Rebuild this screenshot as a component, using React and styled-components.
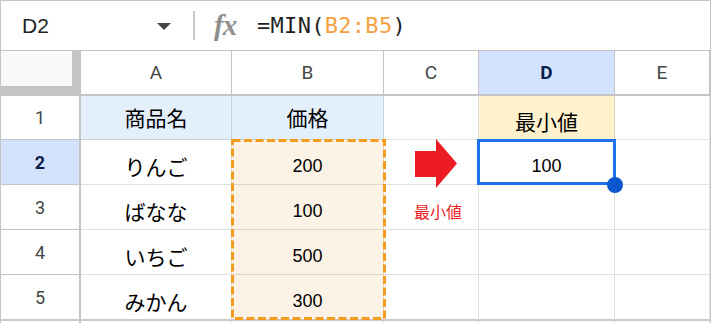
import React from "react";
import styled, { createGlobalStyle } from "styled-components";

const GlobalStyle = createGlobalStyle`
  html, body { margin: 0; padding: 0; background: #fff; }
  body { font-family: "Liberation Sans", "Noto Sans CJK JP", sans-serif; }
`;

const COLS = "80px 151px 152px 95px 136px 95px";
const GRID = "rgba(0,0,0,0.12)";
const HEAD_LINE = "#c4c4c4";

const Frame = styled.div`
  width: 711px;
  height: 323px;
  box-sizing: border-box;
  overflow: hidden;
  border: 1px solid ${HEAD_LINE};
  border-bottom: none;
  background: #fff;
`;

const FormulaBar = styled.div`
  height: 50px;
  box-sizing: border-box;
  border-bottom: 1px solid ${HEAD_LINE};
  display: flex;
  align-items: center;
`;

const NameBox = styled.div`
  width: 192px;
  box-sizing: border-box;
  padding: 0 22px 0 21px;
  display: flex;
  align-items: center;
  justify-content: space-between;
  font-family: "Liberation Sans", Arial, sans-serif;
  font-size: 21px;
  color: #1f1f1f;
`;

const Caret = styled.span`
  width: 0;
  height: 0;
  border-left: 7px solid transparent;
  border-right: 7px solid transparent;
  border-top: 7px solid #444746;
  margin-top: 1px;
`;

const Separator = styled.div`
  width: 2px;
  height: 29px;
  background: #c7c7c7;
`;

const FxIcon = styled.span`
  width: 28px;
  margin-left: 19px;
  font-family: "Liberation Serif", "Times New Roman", serif;
  font-style: italic;
  font-weight: bold;
  font-size: 29px;
  line-height: 1;
  color: #8f8f8f;
  letter-spacing: -1px;
`;

const Formula = styled.div`
  margin-left: 15px;
  font-family: "DejaVu Sans Mono", "Liberation Mono", monospace;
  font-size: 22px;
  color: #1f1f1f;
  letter-spacing: 0.3px;
`;

const Ref = styled.span`
  color: #f6a042;
`;

const Row = styled.div`
  display: grid;
  grid-template-columns: ${COLS};
  grid-template-rows: ${(p) => p.$h}px;
  height: ${(p) => p.$h}px;
`;

const Corner = styled.div`
  box-sizing: border-box;
  background: #f8f9fa;
  border-right: 9px solid ${HEAD_LINE};
  border-bottom: 10px solid ${HEAD_LINE};
`;

const ColHead = styled.div`
  box-sizing: border-box;
  display: flex;
  align-items: center;
  justify-content: center;
  border-right: 1px solid ${HEAD_LINE};
  border-bottom: 2px solid ${HEAD_LINE};
  background: ${(p) => (p.$active ? "#d3e3fd" : "#fff")};
  font-family: Roboto, "Liberation Sans", sans-serif;
  font-size: 19px;
  font-weight: ${(p) => (p.$active ? 700 : 400)};
  color: ${(p) => (p.$active ? "#0b1f4e" : "#444746")};
`;

const RowHead = styled.div`
  box-sizing: border-box;
  display: flex;
  align-items: center;
  justify-content: center;
  border-right: 2px solid ${HEAD_LINE};
  border-bottom: ${(p) => (p.$last ? "2px solid #c9c9c9" : `1px solid ${HEAD_LINE}`)};
  background: ${(p) => (p.$active ? "#d3e3fd" : "#fff")};
  font-family: Roboto, "Liberation Sans", sans-serif;
  font-size: 18px;
  font-weight: ${(p) => (p.$active ? 700 : 400)};
  color: ${(p) => (p.$active ? "#0b1f4e" : "#444746")};
`;

const Cell = styled.div`
  position: relative;
  box-sizing: border-box;
  min-height: 0;
  display: flex;
  align-items: center;
  justify-content: center;
  padding-top: ${(p) => p.$pt || 0}px;
  padding-left: ${(p) => p.$pl || 0}px;
  background: ${(p) => p.$bg || "#fff"};
  border-right: 1px solid ${GRID};
  border-bottom: ${(p) => (p.$last ? "2px solid #c9c9c9" : `1px solid ${GRID}`)};
  font-family: "Liberation Sans", Arial, sans-serif;
  font-size: 18px;
  line-height: 1.2;
  color: #000;
`;

const Jp = styled.span`
  font-family: "Noto Sans CJK JP", sans-serif;
  font-size: 21px;
  line-height: 1.2;
`;

const RedLabel = styled.span`
  font-family: "Noto Sans CJK JP", sans-serif;
  font-size: 16px;
  line-height: 1.2;
  color: #ee2027;
`;

const ArrowSvg = styled.svg`
  position: relative;
  z-index: 1;
  flex: none;
`;

const RangeOutline = styled.svg`
  position: absolute;
  left: -1px;
  top: -1px;
  z-index: 2;
  pointer-events: none;
`;

const Selection = styled.div`
  position: absolute;
  left: -2px;
  top: -1px;
  width: 139px;
  height: 46px;
  box-sizing: border-box;
  border: 3px solid #1a73e8;
  z-index: 3;
`;

const Handle = styled.span`
  position: absolute;
  left: 127px;
  top: 35px;
  width: 16px;
  height: 16px;
  border-radius: 50%;
  background: #0b57d0;
`;

const BLUE = "#e4effc";
const YELLOW = "#fff2cc";
const BEIGE = "#fcf3e6";

const RedArrow = () => (
  <ArrowSvg width="42" height="50" viewBox="0 0 42 50">
    <rect x="0" y="12" width="21.5" height="26" fill="#ed1c24" />
    <polygon points="21,0 42,24.5 21,49" fill="#ed1c24" />
  </ArrowSvg>
);

const RangeBox = () => (
  <RangeOutline width="155" height="182" viewBox="0 0 155 182">
    <rect
      x="1.5"
      y="1.5"
      width="152"
      height="178"
      fill="none"
      stroke="#f39c1f"
      strokeWidth="3"
      strokeDasharray="8 3.5"
    />
  </RangeOutline>
);

const data = [
  { n: 2, a: "りんご", b: "200" },
  { n: 3, a: "ばなな", b: "100" },
  { n: 4, a: "いちご", b: "500" },
  { n: 5, a: "みかん", b: "300" },
];

export default function App() {
  return (
    <>
      <GlobalStyle />
      <Frame>
        <FormulaBar>
          <NameBox>
            <span>D2</span>
            <Caret />
          </NameBox>
          <Separator />
          <FxIcon>fx</FxIcon>
          <Formula>
            =MIN(<Ref>B2:B5</Ref>)
          </Formula>
        </FormulaBar>

        <Row $h={45}>
          <Corner />
          <ColHead>A</ColHead>
          <ColHead>B</ColHead>
          <ColHead>C</ColHead>
          <ColHead $active>D</ColHead>
          <ColHead>E</ColHead>
        </Row>

        <Row $h={44}>
          <RowHead>1</RowHead>
          <Cell $bg={BLUE}>
            <Jp>商品名</Jp>
          </Cell>
          <Cell $bg={BLUE}>
            <Jp>価格</Jp>
          </Cell>
          <Cell />
          <Cell $bg={YELLOW} $pt={8}>
            <Jp>最小値</Jp>
          </Cell>
          <Cell />
        </Row>

        {data.map((r) => {
          const last = r.n === 5;
          return (
            <Row key={r.n} $h={last ? 46 : 45}>
              <RowHead $active={r.n === 2} $last={last}>
                {r.n}
              </RowHead>
              <Cell $pt={10} $last={last}>
                <Jp>{r.a}</Jp>
              </Cell>
              <Cell $pt={10} $bg={BEIGE} $last={last}>
                {r.b}
                {r.n === 2 && <RangeBox />}
              </Cell>
              {r.n === 2 ? (
                <Cell $pt={4} $pl={10}>
                  <RedArrow />
                </Cell>
              ) : r.n === 3 ? (
                <Cell $pt={10} $pl={14}>
                  <RedLabel>最小値</RedLabel>
                </Cell>
              ) : (
                <Cell $last={last} />
              )}
              {r.n === 2 ? (
                <Cell $pt={10}>
                  100
                  <Selection>
                    <Handle />
                  </Selection>
                </Cell>
              ) : (
                <Cell $last={last} />
              )}
              <Cell $last={last} />
            </Row>
          );
        })}

        <Row $h={45}>
          <RowHead />
          <Cell />
          <Cell />
          <Cell />
          <Cell />
          <Cell />
        </Row>
      </Frame>
    </>
  );
}
